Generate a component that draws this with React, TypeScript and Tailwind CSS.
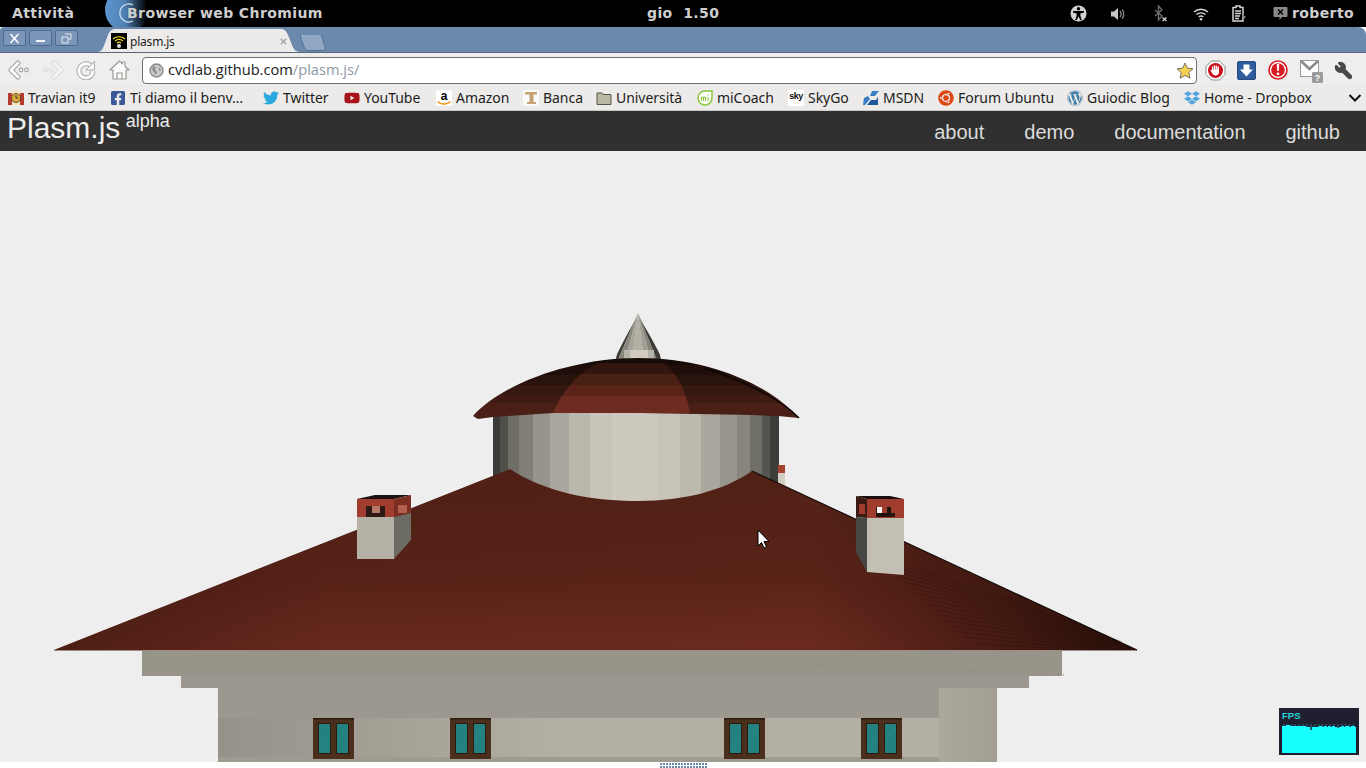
import React from "react";
import { FaFacebookSquare, FaTwitter, FaYoutube, FaUbuntu, FaWordpress, FaDropbox } from "react-icons/fa";
import { Wrench } from "lucide-react";

function TopIcons() {
  return (
    <div className="flex items-center ml-auto h-full">
      <svg className="w-[17px] h-[17px]" viewBox="0 0 17 17">
        <circle cx="8.5" cy="8.5" r="8" fill="#d2d2d2" />
        <circle cx="8.5" cy="3.8" r="1.7" fill="#000" />
        <path d="M3 6h11v1.4l-3.6 1v2.4l1.4 4.4h-1.4L8.5 11.4 6.6 15.2H5.2l1.4-4.4V8.4L3 7.4z" fill="#000" />
      </svg>
      <svg className="w-[16px] h-[16px] ml-[23px]" viewBox="0 0 16 16">
        <path d="M1 5.5h3L8 2v12L4 10.5H1z" fill="#c8c8c8" />
        <path d="M10 5c1.2 1.6 1.2 4.4 0 6M12.2 3.4c2 2.6 2 6.6 0 9.2" stroke="#8a8a8a" strokeWidth="1.3" fill="none" />
      </svg>
      <svg className="w-[15px] h-[17px] ml-[27px]" viewBox="0 0 15 17">
        <path d="M2 5l7 6-3.5 4V1L9 5l-7 6" stroke="#6d6d6d" strokeWidth="1.4" fill="none" />
        <path d="M9.5 12.5l4 3.5m0-3.5l-4 3.5" stroke="#d2d2d2" strokeWidth="1.4" />
      </svg>
      <svg className="w-[16px] h-[14px] ml-[25px]" viewBox="0 0 16 14">
        <path d="M1 5c4-3.6 10-3.6 14 0M3.4 7.6c2.6-2.3 6.6-2.3 9.2 0M5.7 10c1.3-1.1 3.3-1.1 4.6 0" stroke="#d6d6d6" strokeWidth="1.4" fill="none" />
        <circle cx="8" cy="12.3" r="1.3" fill="#d6d6d6" />
      </svg>
      <svg className="w-[15px] h-[17px] ml-[23px]" viewBox="0 0 15 17">
        <path d="M4 1h4v1.5h3V16H1V2.5h3z" fill="none" stroke="#d4d4d4" strokeWidth="1.5" />
        <path d="M3 6h6M3 8.5h6M3 11h5M3 13.5h4" stroke="#d4d4d4" strokeWidth="1.3" />
        <path d="M12 8l-2 4h2l-1 4 3-5h-2z" fill="#7a7a7a" />
      </svg>
      <svg className="w-[15px] h-[15px] ml-[26px]" viewBox="0 0 15 15">
        <path d="M1.5 1h12a1 1 0 011 1v8a1 1 0 01-1 1H9l-2.500 3v-3h-5a1 1 0 01-1-1V2a1 1 0 011-1z" fill="#8a8a8a" />
        <path d="M5 3.500l5 5m0-5l-5 5" stroke="#000" strokeWidth="1.500" />
      </svg>
      <span className="ml-[4px] mr-[12px]">roberto</span>
    </div>
  );
}

function Chevron({ faded, flip }: { faded?: boolean; flip?: boolean }) {
  const stroke = faded ? "#dcdcda" : "#a6a6a4";
  return (
    <svg className={`w-[22px] h-[20px] ${flip ? "-scale-x-100" : ""}`} viewBox="0 0 22 20">
      <path d="M10 3L3 10L10 17" stroke={stroke} strokeWidth="5" fill="none" strokeLinejoin="round" strokeLinecap="round" />
      <path d="M10 3L3 10L10 17" stroke={faded ? "#f5f5f3" : "#ffffff"} strokeWidth="2.800" fill="none" strokeLinejoin="round" strokeLinecap="round" />
      <circle cx="13" cy="10" r="1.900" fill="none" stroke={stroke} strokeWidth="1.100" />
      <circle cx="18.500" cy="10" r="1.900" fill="none" stroke={stroke} strokeWidth="1.100" />
    </svg>
  );
}

function Toolbar() {
  return (
    <div className="h-[31px] bg-[#efeeec] flex items-center pl-[8px] pr-[13px] pt-[3px] shrink-0">
      <div className="w-[34px]"><Chevron /></div>
      <div className="w-[34px]"><Chevron faded flip /></div>
      <svg className="w-[20px] h-[20px] mr-[13px]" viewBox="0 0 20 20">
        <path d="M14.500 5.500A7 7 0 1017 11" stroke="#aaaaa8" strokeWidth="5" fill="none" />
        <path d="M14.500 5.500A7 7 0 1017 11" stroke="#fbfbf9" strokeWidth="3" fill="none" />
        <path d="M18.500 1.500V10H10z" fill="#fbfbf9" stroke="#aaaaa8" strokeWidth="1" strokeLinejoin="round" />
      </svg>
      <svg className="w-[21px] h-[20px] mr-[12px]" viewBox="0 0 21 20">
        <path d="M10.500 1L1 10h3v9h13v-9h3l-4-3.800V2h-2.500v1.800z" fill="#fbfbf9" stroke="#9a9a98" strokeWidth="1.200" strokeLinejoin="round" />
        <path d="M8 19v-6h5v6" fill="none" stroke="#9a9a98" strokeWidth="1.200" />
      </svg>
      <div className="h-[27px] w-[1056px] bg-white border border-[#6f6f6d] rounded-[4px] flex items-center pl-[6px] pr-[2px] font-['Open_Sans','Noto_Sans',sans-serif] text-[14.650px]">
        <svg className="w-[15px] h-[15px] mr-[4px]" viewBox="0 0 15 15">
          <circle cx="7.500" cy="7.500" r="6.500" fill="#c9c9c9" stroke="#8b8b8b" strokeWidth="1.400" />
          <path d="M4 3l3 1-1 3 2 2-1 3-2-3-2-2zM10 4l2 3-2 1z" fill="#8f8f8f" />
        </svg>
        <span className="text-[#202020]">cvdlab.github.com</span>
        <span className="text-[#8d9aa5]">/plasm.js/</span>
        <svg className="w-[18px] h-[17px] ml-auto" viewBox="0 0 18 17">
          <path d="M9 1l2.400 5.200 5.600.600-4.200 3.800 1.200 5.600L9 13.400l-5 2.800 1.200-5.600L1 6.800l5.600-.600z" fill="#f3d14d" stroke="#77706a" strokeWidth="1" />
        </svg>
      </div>
      <svg className="w-[21px] h-[21px] ml-[8px]" viewBox="0 0 21 21">
        <path d="M6.500 1h8L20 6.500v8L14.500 20h-8L1 14.500v-8z" fill="#fff" stroke="#8a8a8a" />
        <circle cx="10.500" cy="10.500" r="7.500" fill="#c9101a" />
        <path d="M7 10V6.500h1.300V9.500h.5V5.500h1.300v4h.5V5.500h1.300v4h.5V6.500H14V12c0 2-1.300 3.500-3.300 3.500S7.500 14 6.500 12L5.500 10.500 6 9.800z" fill="#fff" />
      </svg>
      <svg className="w-[19px] h-[19px] ml-[11px]" viewBox="0 0 19 19">
        <rect x="0.500" y="0.500" width="18" height="18" rx="1.500" fill="#2f5c9c" stroke="#274a7e" />
        <path d="M6.500 3.500h6v5h3.500l-6.500 7-6.500-7h3.500z" fill="#fff" />
      </svg>
      <svg className="w-[20px] h-[20px] ml-[12px]" viewBox="0 0 20 20">
        <circle cx="10" cy="10" r="9" fill="#fff" stroke="#d81920" strokeWidth="1.600" />
        <circle cx="10" cy="10" r="6.800" fill="#d81920" />
        <path d="M8.800 4h2.400l-.4 7H9.200z" fill="#fff" />
        <circle cx="10" cy="13.800" r="1.400" fill="#fff" />
      </svg>
      <svg className="w-[23px] h-[24px] ml-[12px] mt-[3px]" viewBox="0 0 23 24">
        <rect x="0.500" y="0.500" width="18" height="16" fill="#fdfdfb" stroke="#9a9a98" />
        <path d="M1 1l8.500 8L18 1" fill="none" stroke="#8a8a88" strokeWidth="2.500" />
        <rect x="12" y="12" width="11" height="11" rx="1.500" fill="#9b9b99" />
        <text x="17.500" y="21" fontSize="9" fontWeight="700" textAnchor="middle" fill="#fff" fontFamily="Liberation Sans">?</text>
      </svg>
      <Wrench className="w-[19px] h-[19px] ml-[11px] -scale-x-100 text-[#4a4a4a]" fill="#4a4a4a" strokeWidth={2} />
    </div>
  );
}

const ico = "w-[16px] h-[16px]";
const marks: { label: string; w: string; icon: React.ReactNode }[] = [
  { label: "Travian it9", w: "w-[102px]", icon: (
    <svg className={ico} viewBox="0 0 16 16"><rect y="3" width="16" height="12" fill="#b33a2e" /><rect x="4" width="8" height="15" fill="#f0e6c4" /><circle cx="8" cy="8" r="4.500" fill="#d9a93a" stroke="#6a4a1a" /><path d="M8 5v3h2" stroke="#333" fill="none" /></svg>
  ) },
  { label: "Ti diamo il benv…", w: "w-[153px]", icon: <FaFacebookSquare className={ico} color="#3b5998" /> },
  { label: "Twitter", w: "w-[81px]", icon: <FaTwitter className={ico} color="#2aa9e0" /> },
  { label: "YouTube", w: "w-[92px]", icon: <FaYoutube className={ico} color="#a8141a" /> },
  { label: "Amazon", w: "w-[87px]", icon: (
    <span className="relative w-[16px] h-[16px] bg-white rounded-[2px] text-[12px] leading-[12px] font-bold text-black text-center font-['Liberation_Sans',sans-serif]">
      a
      <svg className="absolute left-0 bottom-0 w-[16px] h-[6px]" viewBox="0 0 16 6">
        <path d="M1.500 1.500C5 5 11 5 14.500 1.500" stroke="#f29a1f" strokeWidth="1.600" fill="none" />
      </svg>
    </span>
  ) },
  { label: "Banca", w: "w-[73px]", icon: (
    <svg className={ico} viewBox="0 0 16 16"><rect width="16" height="16" fill="#fafafa" /><path d="M2 2h12v2.500H10.500V12H13v2H4v-2h2.500V4.500H2z" fill="#c9a274" /></svg>
  ) },
  { label: "Università", w: "w-[101px]", icon: (
    <svg className={ico} viewBox="0 0 16 16"><path d="M1 3h5l1 1.500h8V14.500H1z" fill="#b9b9a4" stroke="#55554a" /></svg>
  ) },
  { label: "miCoach", w: "w-[91px]", icon: (
    <svg className={ico} viewBox="0 0 16 16"><path d="M8 1a7 7 0 107 7V1z" fill="#fff" stroke="#8cc63f" strokeWidth="1.500" /><path d="M4.500 11V7M4.500 8c1-1.500 2-1 2 0v3M6.500 8c1-1.500 2-1 2 0v3M11 7v4M11 4.500v1" stroke="#8cc63f" strokeWidth="1.100" fill="none" /></svg>
  ) },
  { label: "SkyGo", w: "w-[75px]", icon: (
    <span className="w-[16px] h-[16px] bg-white text-[9px] leading-[13px] font-bold tracking-[-0.5px] text-[#111] text-center font-['Liberation_Sans',sans-serif]">sky</span>
  ) },
  { label: "MSDN", w: "w-[75px]", icon: (
    <svg className={ico} viewBox="0 0 16 16"><path d="M9 1h7l-4 5H7zM1 8l4-2 2 3-5 6H0z" fill="#3b80c4" /><path d="M8 10h5l2-3v8H4z" fill="#1e5a9a" /></svg>
  ) },
  { label: "Forum Ubuntu", w: "w-[129px]", icon: <FaUbuntu className={ico} color="#dd4814" /> },
  { label: "Guiodic Blog", w: "w-[117px]", icon: <FaWordpress className={ico} color="#3f7ea8" /> },
  { label: "Home - Dropbox", w: "w-[131px]", icon: <FaDropbox className={ico} color="#4fa3dc" /> },
];

function Bookmarks() {
  return (
    <div className="h-[27px] bg-[#ecebe9] border-b border-[#c8c8c6] flex items-center pl-[8px] pr-[4px] pt-[1px] shrink-0 font-['Noto_Sans',sans-serif] text-[14px] tracking-[-0.05px] text-[#1d1d1d]">
      {marks.map((m) => (
        <div key={m.label} className={`${m.w} flex items-center gap-[4px] whitespace-nowrap shrink-0`}>
          {m.icon}
          <span>{m.label}</span>
        </div>
      ))}
      <svg className="w-[14px] h-[10px] ml-auto" viewBox="0 0 14 10">
        <path d="M1.500 2l5.500 5.500L12.500 2" stroke="#111" strokeWidth="2" fill="none" />
      </svg>
    </div>
  );
}

function Tabs() {
  return (
    <div className="h-[26px] bg-[#6b88ad] rounded-tr-[8px] rounded-tl-[4px] border-b border-[#59667a] flex items-end shrink-0">
      <div className="flex self-start mt-[3px] ml-[3px] gap-[3px] w-[94px]">
        {["x", "min", "max"].map((k) => (
          <div key={k} className="w-[23px] h-[16px] rounded-[2px] border border-[#506a8c] bg-[#7b96b8] flex items-center justify-center">
            <svg className="w-[13px] h-[11px]" viewBox="0 0 13 11">
              {k === "x" && <path d="M2.500 1l8 9m0-9l-8 9" stroke="#fff" strokeWidth="1.600" />}
              {k === "min" && <path d="M2 8h9" stroke="#fff" strokeWidth="1.800" />}
              {k === "max" && <path d="M5 1h6v5H8.500M2 4h6v6H2z" stroke="#e8eef6" strokeWidth="1" fill="none" />}
            </svg>
          </div>
        ))}
      </div>
      <div className="relative w-[208px] h-[23px] flex items-center pl-[14px] pr-[18px] font-['Noto_Sans',sans-serif] text-[12px] tracking-[-0.2px] text-[#1d1d1d]">
        <svg className="absolute inset-0 w-full h-full" viewBox="0 0 208 23">
          <path d="M0 23C5 23 6 19 8 14L11 6C13 1 15 0 20 0H183c5 0 6 2 8 6l4 10c2 5 4 7 9 7z" fill="#ecebe9" />
        </svg>
        <svg className="relative w-[16px] h-[16px] mr-[3px]" viewBox="0 0 16 16">
          <rect width="16" height="16" fill="#000" />
          <path d="M2 6c3.500-3 8.500-3 12 0M4 8c2.500-2 5.500-2 8 0M6 10c1.200-1 2.800-1 4 0" stroke="#f6e11f" strokeWidth="1.200" fill="none" />
          <circle cx="8" cy="13" r="2" fill="#ddd" />
        </svg>
        <span className="relative top-[1px]">plasm.js</span>
        <svg className="relative w-[7px] h-[7px] ml-auto top-[1px]" viewBox="0 0 9 9">
          <path d="M1 1l7 7m0-7L1 8" stroke="#a7a7a5" strokeWidth="2" />
        </svg>
      </div>
      <svg className="w-[27px] h-[17px] -ml-[5px] mb-[1px]" viewBox="0 0 27 17">
        <path d="M1 0h17c2 0 3 1 4 3l3 10c.6 2-.500 3.500-2 3.500H8C6 16.500 5 15 4 13L.500 3C0 1.500 0 0 1 0z" fill="#90a7c6" stroke="#55708f" />
      </svg>
    </div>
  );
}

const drum = [
  [493, "#3a3a36"], [500, "#50504b"], [508, "#6f6e67"], [519, "#807e76"], [533, "#96948c"], [550, "#a9a79d"], [569, "#bab7ac"],
  [590, "#c8c4b9"], [612, "#cec9be"], [633, "#cdc8bd"], [659, "#c8c3b8"], [680, "#bdb9ae"], [701, "#aaa89e"], [720, "#97958c"],
  [737, "#87857c"], [750, "#6f6e67"], [762, "#55544f"], [770, "#3c3c38"],
] as [number, string][];

const sideBands: [number, number, string][] = [
  [355, 10, "#170b07"], [365, 10, "#1f0e09"], [375, 10, "#2b130d"], [385, 10, "#351811"], [395, 8, "#3f1b13"], [403, 20, "#4a1f16"],
];
const midBands: [number, number, string][] = [
  [355, 8, "#170b07"], [363, 11, "#33170e"], [374, 11, "#482014"], [385, 11, "#5a2419"], [396, 20, "#6d2b21"],
];
const spire: [number, number, string][] = [
  [614, 618, "#3e3d39"], [618, 625, "#8a877e"], [625, 632, "#a5a297"], [632, 644, "#b2afa4"], [644, 651, "#a09d93"], [651, 657, "#85837a"], [657, 663, "#3e3d39"],
];

function Chimney({ side }: { side: "left" | "right" }) {
  if (side === "left") {
    return (
      <g>
        <path d="M357 499L375 495H411L394 499z" fill="#1c1210" />
        <rect x="357" y="499" width="37" height="18" fill="#a03d2e" />
        <path d="M394 499L411 495V513L394 517z" fill="#7c2e22" />
        <path d="M394 517L411 513V540L394 559z" fill="#6c6b64" />
        <rect x="357" y="517" width="37" height="42" fill="#b5b1a6" />
        <path d="M366 506h6v7h8v-7h5v11h-19z" fill="#2d1a14" />
        <rect x="372" y="506" width="8" height="7" fill="#b57a69" />
        <rect x="398" y="505" width="9" height="8" fill="#b5604f" />
      </g>
    );
  }
  return (
    <g>
      <path d="M856 496H890L904 499H867z" fill="#1c0f0b" />
      <rect x="867" y="499" width="37" height="19" fill="#a03d2e" />
      <path d="M856 496L867 499V518L856 517z" fill="#3a1a12" />
      <path d="M856 517L867 518V572L856 552z" fill="#474743" />
      <path d="M867 518H904V575L867 572z" fill="#c3bfb4" />
      <path d="M859 504h6v10h-6z" fill="#a03d2e" />
      <path d="M876 507h19v10h-19z" fill="#24120d" />
      <rect x="882" y="507" width="5" height="6" fill="#a03d2e" />
      <rect x="891" y="507" width="4" height="6" fill="#a03d2e" />
      <rect x="877" y="507" width="5" height="6" fill="#ffffff" />
    </g>
  );
}

function Window({ x }: { x: number }) {
  return (
    <g>
      <rect x={x} y="718" width="41" height="41" fill="#4b2f1d" />
      <path d={`M${x} 718h41v1.500h-41z`} fill="#2a1a10" />
      <rect x={x + 5} y="723" width="13" height="31" fill="#2c1a10" />
      <rect x={x + 23} y="723" width="13" height="31" fill="#2c1a10" />
      <rect x={x + 6} y="724" width="11" height="29" fill="#23827f" />
      <rect x={x + 24} y="724" width="11" height="29" fill="#23827f" />
      <path d={`M${x + 6} 750L${x + 17} 738M${x + 24} 740L${x + 35} 726`} stroke="#2f9c98" strokeWidth="1" opacity="0.400" />
    </g>
  );
}

function Scene() {
  const striae = Array.from({ length: 16 }, (_, i) => i);
  const dots = Array.from({ length: 19 }, (_, i) => i);
  const roof = "M54 650L510 469C545 492 590 501 638 501C685 501 725 490 752 471L1137 650z";
  return (
    <svg className="w-[1366px] h-[611px] block" viewBox="0 151 1366 611">
      <defs>
        <clipPath id="dome"><path d="M473 416C500 385 570 358 638 358C710 358 770 385 799 418L778 416L752 415L640 413L553 413L493 417L478 419z" /></clipPath>
        <clipPath id="domeMid"><path d="M553 413C562 392 578 372 600 362H662C678 372 686 392 690 413z" /></clipPath>
        <clipPath id="spire"><path d="M638 313C631 332 617 345 616 360H661C660 345 645 332 638 313z" /></clipPath>
        <linearGradient id="roofV" x1="0" y1="470" x2="0" y2="650" gradientUnits="userSpaceOnUse">
          <stop offset="0" stopColor="#512116" />
          <stop offset="0.600" stopColor="#5a2318" />
          <stop offset="1" stopColor="#6b2a1f" />
        </linearGradient>
        <linearGradient id="roofH" x1="54" y1="0" x2="1137" y2="0" gradientUnits="userSpaceOnUse">
          <stop offset="0" stopColor="#2a100a" stopOpacity="0.450" />
          <stop offset="0.250" stopColor="#2a100a" stopOpacity="0.060" />
          <stop offset="0.700" stopColor="#2a100a" stopOpacity="0" />
          <stop offset="1" stopColor="#1d0b07" stopOpacity="0.850" />
        </linearGradient>
        <linearGradient id="wallL" x1="218" y1="0" x2="560" y2="0" gradientUnits="userSpaceOnUse">
          <stop offset="0" stopColor="#96928a" />
          <stop offset="1" stopColor="#b3afa3" />
        </linearGradient>
        <linearGradient id="wallR" x1="939" y1="0" x2="997" y2="0" gradientUnits="userSpaceOnUse">
          <stop offset="0" stopColor="#aca89d" />
          <stop offset="1" stopColor="#a29e93" />
        </linearGradient>
      </defs>
      <rect x="0" y="151" width="1366" height="611" fill="#eeeeee" />

      <g clipPath="url(#spire)">
        {spire.map(([a, b, c]) => (
          <path key={a} d={`M638 313L${a} 360H${b}z`} fill={c} />
        ))}
        <rect x="624" y="350" width="6" height="10" fill="#b5b2a7" />
        <rect x="630" y="350" width="18" height="10" fill="#d0ccc0" />
        <rect x="648" y="350" width="6" height="10" fill="#b5b2a7" />
      </g>

      <g>
        {drum.map(([x, c], i) => {
          const next = i + 1 < drum.length ? drum[i + 1][0] : 779;
          return <rect key={x} x={x} y="412" width={next - x} height="95" fill={c} />;
        })}
      </g>
      <rect x="778" y="465" width="7" height="8" fill="#a8402f" />
      <rect x="778" y="473" width="7" height="14" fill="#d2cec4" />

      <g clipPath="url(#dome)">
        {sideBands.map(([y, h, c]) => <rect key={y} x="470" y={y} width="332" height={h} fill={c} />)}
      </g>
      <g clipPath="url(#domeMid)">
        {midBands.map(([y, h, c]) => <rect key={y} x="550" y={y} width="145" height={h} fill={c} />)}
      </g>
      <path d="M705 368C745 382 780 398 799 418" stroke="#0d0605" strokeWidth="1.500" fill="none" />

      <path d={roof} fill="url(#roofV)" />
      <path d={roof} fill="url(#roofH)" />
      {striae.map((i) => (
        <path key={i} d={`M${880 + i * 6} ${560 + i * 5.500}Q${1000 + i * 3} ${590 + i * 4} ${1122 - i} ${642 + i * 0.4}`} stroke="#240d08" strokeWidth="1" opacity="0.300" fill="none" />
      ))}
      <path d="M752 471L1137 650" stroke="#140a07" strokeWidth="1.200" />

      <Chimney side="left" />
      <Chimney side="right" />

      <rect x="142" y="651" width="920" height="25" fill="#98948a" />
      <rect x="181" y="676" width="848" height="12" fill="#9b978e" />
      <rect x="218" y="688" width="721" height="30" fill="#9c988f" />
      <rect x="218" y="718" width="721" height="39" fill="url(#wallL)" />
      <rect x="560" y="718" width="379" height="39" fill="#b3afa3" />
      <rect x="218" y="757" width="721" height="5" fill="#9f9b91" />
      <rect x="939" y="688" width="58" height="74" fill="url(#wallR)" />
      <rect x="54" y="650" width="1083" height="1" fill="#6b4a40" opacity="0.600" />
      {dots.map((i) => (
        <g key={i} fill="#85817a">
          <rect x={662 + i * 22} y={658 + i * 0.9} width="1" height="1" />
          <rect x={667 + i * 22} y={658 + i * 0.9} width="1" height="1" />
        </g>
      ))}
      {[313, 450, 724, 861].map((x) => <Window key={x} x={x} />)}

      <path d="M758 530V546L761.500 542.500L764 548L766.500 547L764 541.500H769z" fill="#fff" stroke="#000" strokeWidth="1" />
    </svg>
  );
}

const fpsTop = [2,2,2,1,1,1,2,2,2,2,2,2,2,2,2,2,2,2,3,3,3,6,3,3,3,3,3,2,2,2,3,2,2,3,2,2,3,2,2,3,3,4,3,3,2,2,3,2,2,2,3,2,2,2,3];

function Fps() {
  return (
    <div className="absolute right-[7px] bottom-[7px] w-[80px] h-[47px] bg-[#1f1f30] px-[3px] pt-[2px]">
      <div className="h-[11px] text-[9.500px] leading-[11px] font-bold text-[#27d4dd] font-['Liberation_Sans',sans-serif]">FPS</div>
      <svg className="w-[74px] h-[29px] mt-[3px] block" viewBox="0 0 74 29">
        <rect width="74" height="29" fill="#18ffff" />
        {fpsTop.map((h, i) => <rect key={i} x={i * 1.35} y="0" width="1.400" height={h} fill="#1f1f30" />)}
      </svg>
    </div>
  );
}

export default function App() {
  return (
    <div className="w-[1366px] h-[768px] overflow-hidden bg-white flex flex-col font-['Liberation_Sans',sans-serif]">
      <div className="relative h-[27px] bg-black text-[#cfcfcf] font-bold font-['DejaVu_Sans',sans-serif] text-[14px] tracking-[0.4px] flex items-center shrink-0">
        <span className="ml-[12px] w-[115px]">Attività</span>
        <svg className="absolute left-[100px] top-0 w-[50px] h-[27px]" viewBox="0 0 50 27">
          <defs>
            <linearGradient id="chr" x1="0" y1="0" x2="1" y2="0">
              <stop offset="0" stopColor="#5d96d1" />
              <stop offset="0.450" stopColor="#4f80b2" />
              <stop offset="0.950" stopColor="#000" />
            </linearGradient>
          </defs>
          <circle cx="27" cy="10" r="22" fill="url(#chr)" />
          <path d="M33 5A9 9 0 1033 21" fill="none" stroke="#cfe0f0" strokeWidth="1.300" />
        </svg>
        <span className="relative">Browser web Chromium</span>
        <span className="absolute left-[647px] whitespace-pre">gio  1.50</span>
        <TopIcons />
      </div>
      <Tabs />
      <Toolbar />
      <Bookmarks />
      <div className="h-[40px] bg-[#303030] flex justify-between shrink-0 pl-[7px] pr-[26px]">
        <div className="text-[30px] leading-[34px] text-[#ececec]">
          Plasm.js <sup className="text-[18px] align-baseline relative -top-[11px] -ml-[3px]">alpha</sup>
        </div>
        <div className="flex gap-[40px] text-[20px] leading-[42px] text-[#dcdcdc]">
          <span>about</span>
          <span>demo</span>
          <span>documentation</span>
          <span>github</span>
        </div>
      </div>
      <div className="relative h-[611px] shrink-0">
        <Scene />
        <Fps />
      </div>
      <div className="flex-1 flex flex-col items-center gap-[1px] pl-[1px] pt-[1px]">
        <div className="w-[48px] h-[2px] bg-[repeating-linear-gradient(90deg,#6b88ad_0,#6b88ad_2px,#ffffff_2px,#ffffff_3px)]" />
        <div className="w-[48px] h-[2px] bg-[repeating-linear-gradient(90deg,#6b88ad_0,#6b88ad_2px,#ffffff_2px,#ffffff_3px)]" />
      </div>
    </div>
  );
}
